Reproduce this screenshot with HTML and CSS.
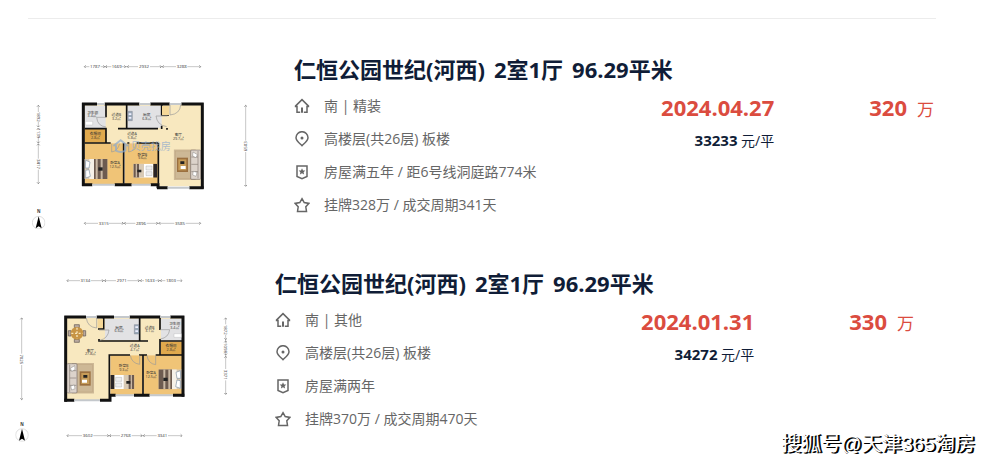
FILE: index.html
```
<!DOCTYPE html>
<html lang="zh-CN">
<head>
  <meta charset="UTF-8">
  <meta name="viewport" content="width=device-width, initial-scale=1.0">
  <title>仁恒公园世纪(河西) 成交</title>
  <link rel="stylesheet" href="styles.css">
</head>
<body>

<!-- shared icons and furniture -->
<svg class="defs" width="0" height="0" aria-hidden="true">
  <symbol id="icon-home" viewBox="0 0 16 16">
    <path d="M.8 8.600h2.200v5.700h3.200M15.200 8.600H13v5.700H9.800M1.200 8.400 8 1.600l6.800 6.800" />
    <path d="M8 9.500v5.200" stroke-width="2" />
  </symbol>
  <symbol id="icon-pin" viewBox="0 0 16 16">
    <path d="M8 14.600C5 11.800 2 9.700 2 6.700a6 6 0 0 1 12 0C14 9.700 11 11.800 8 14.600z" />
    <circle class="solid" cx="8" cy="7" r="1.500" />
  </symbol>
  <symbol id="icon-badge" viewBox="0 0 16 16">
    <path d="M3 2h10v10.500L8 14.700l-5-2.200z" />
    <path class="solid" d="M8 4.200l1 2.200 2.300.2-1.700 1.600.5 2.300L8 9.300l-2.100 1.200.5-2.300-1.700-1.600 2.300-.2z" />
  </symbol>
  <symbol id="icon-star" viewBox="0 0 16 16">
    <path d="M8 1.700l2.200 3.900 4.600.8-3 3.400.7 4.700H3.500l.7-4.700-3-3.400 4.600-.8z" />
  </symbol>
  <symbol id="compass" viewBox="0 0 40 40">
    <circle cx="20" cy="20" r="19" fill="none" stroke="#ccc" stroke-width="2" />
    <path d="M20 1l9 36-9-6-9 6z" fill="#000" />
  </symbol>
  <symbol id="bed" viewBox="0 0 72 60">
    <rect width="70" height="60" fill="#d9cab4" />
    <rect x="16" width="14" height="60" fill="#f6f1e8" />
    <rect x="30" width="40" height="60" fill="#6d5b50" />
    <path d="M38 0v60M53 0v60" stroke="#c9b8a4" stroke-width="6" />
    <path d="M5 4l13 5-3 18H4zM5 34l10-2 4 20-14 5z" fill="#fff" stroke="#7f92a8" stroke-width="2" />
    <path d="M0 0v60" stroke="#4d4a4b" stroke-width="4" />
    <path d="M43 25h13v10H43z" fill="#222" />
  </symbol>
  <symbol id="small-bed" viewBox="0 0 72 42">
    <rect width="60" height="42" fill="#fff" />
    <rect width="18" height="42" fill="#6d5b50" />
    <path d="M9 0v42" stroke="#c9b8a4" stroke-width="4" />
    <rect x="18" width="14" height="42" fill="#d9cab4" />
    <rect x="60" width="12" height="42" fill="#292426" />
    <path d="M38 7h18v12H38zM38 24h18v12H38z" fill="#eee" stroke="#999" />
    <path d="M12 18h12v8H12z" fill="#222" />
  </symbol>
  <symbol id="lounge" viewBox="0 0 82 92">
    <rect y="0" width="66" height="92" fill="#cdb896" />
    <rect x="5" y="5" width="55" height="82" fill="none" stroke="#b69b77" />
    <rect x="10" y="25" width="33" height="43" fill="#9b7040" />
    <rect x="14" y="30" width="24" height="33" fill="#c69c58" />
    <path d="M20 36h12v8H20z" fill="#222" />
    <path d="M21 50h15v9H21z" fill="#fff" />
    <rect x="51" y="2" width="30" height="88" rx="3" fill="#dcd3cb" stroke="#756b66" stroke-width="2" />
    <path d="M53 23h20M53 45h20M53 67h20M73 5v82" stroke="#887d77" stroke-width="2" fill="none" />
    <path d="M58 8l13 8-4 9-10-5zM59 66l11 3-3 12-10-4z" fill="#fff" stroke="#555" />
  </symbol>
</svg>

<main>
  <article class="listing">
    <svg class="plan" viewBox="0 0 720 570" role="img" aria-label="户型图">
      <g class="room">
        <path class="living" d="M190 162h355v247H416V280H190z" />
        <path class="wood" d="M194 280h116v123H194zM314 280h100v123H314z" />
        <path class="closet" d="M194 236h64v42h-64z" />
        <path class="tile" d="M194 167h63v67h-63zM322 167h103v67H322z" />
      </g>
      <g class="walls">
        <path d="M190 158v250M186 162h45M254 162h104M391 162h58M484 162h67M547 158v258" />
        <path d="M186 404h31M284 404h51M392 404h22M411 413h32M508 413h43M414 400v15" />
      </g>
      <g class="inner-walls">
        <path d="M258 165v37M258 234v45M194 236h66M194 279h78M311 279v122M322 279h6M350 279h65M415 279v122M320 165v71M294 236h120M425 165v30h22M425 227v10M441 234v5" />
      </g>
      <g class="windows">
        <path d="M231 162h23M358 162h33M217 404h67M335 404h57M443 413h65M449 162h35" />
      </g>
      <g class="doors">
        <path d="M258 202h-28q2 26 28 29M442 198h-34q3 27 32 32M450 165v30q30-3 32-30M275 281v25q18-3 24-25M326 281v25q18-3 22-25" />
      </g>
      <path d="M196 214h22v11h-22z" fill="#fff" stroke="#aaa" />
      <path d="M323 184h14v28h-14z" fill="#9aa9b8" stroke="#667" />
      <path d="M326 190h8v5h-8zM326 201h8v5h-8z" fill="#eef" />
      <path d="M426 168h21v27h-21z" fill="#f5d898" />
      <use href="#bed" x="192" y="327" width="72" height="60" />
      <use href="#small-bed" x="340" y="341" width="72" height="42" />
      <use href="#lounge" x="461" y="298" width="82" height="92" />
      <g class="brand">
        <path d="M280 288l22-17 22 17M288 286v16q14 8 28 0v-16" />
        <text x="392" y="301">贝壳找房</text>
      </g>
      <g class="labels">
        <text x="218" y="191">卫生间</text><text x="216" y="202">3.4㎡</text>
        <text x="289" y="197">过道B</text><text x="289" y="209">3.2㎡</text>
        <text x="380" y="197">厨房</text><text x="380" y="209">6.8㎡</text>
        <text x="226" y="255">衣帽间</text><text x="226" y="267">2.8㎡</text>
        <text x="336" y="255">过道A</text><text x="336" y="267">5.8㎡</text>
        <text x="475" y="257">客厅</text><text x="475" y="269">29.7㎡</text>
        <text x="285" y="343">卧室A</text><text x="285" y="355">12.5㎡</text>
        <text x="367" y="317">卧室B</text><text x="367" y="328">9.6㎡</text>
      </g>
      <g class="rules">
        <path d="M194 50h14M242 50h32M306 50h48M390 50h78M502 50h40M194 520h40M266 520h80M380 520h83M497 520h44" />
        <path d="M55 166v20M55 215v15M55 262v64M55 359v42M677 166v106M677 306v102" />
        <path class="ticks" d="M197 46l-4 4 4 4M250 46l4 4-4 4M261 46l-4 4 4 4M313 46l4 4-4 4M326 46l-4 4 4 4M420 46l4 4-4 4M431 46l-4 4 4 4M538 46l4 4-4 4M197 516l-4 4 4 4M306 516l4 4-4 4M317 516l-4 4 4 4M409 516l4 4-4 4M421 516l-4 4 4 4M538 516l4 4-4 4M51 170l4-4 4 4M51 227l4 4 4-4M51 238l4-4 4 4M51 275l4 4 4-4M51 286l4-4 4 4M51 397l4 4 4-4M673 170l4-4 4 4M673 405l4 4 4-4" />
      </g>
      <g class="sizes">
        <text x="225" y="55">1787</text><text x="290" y="55">1669</text><text x="372" y="55">2932</text><text x="485" y="55">3288</text>
        <text x="251" y="525">3315</text><text x="363" y="525">2896</text><text x="480" y="525">3585</text>
        <text transform="translate(50 200) rotate(90)">1892</text>
        <text transform="translate(50 250) rotate(90)">1139</text>
        <text transform="translate(50 342) rotate(90)">3417</text>
        <text transform="translate(682 289) rotate(-90)">6503</text>
        <text class="north" x="56" y="490">N</text>
      </g>
      <use href="#compass" x="36" y="498" width="40" height="40" />
    </svg>

    <div class="info">
      <h2><span>仁恒公园世纪(河西)</span> <span>2室1厅</span> <span>96.29平米</span></h2>
      <div class="summary">
        <ul class="details">
          <li><svg class="icon"><use href="#icon-home" /></svg>南 | 精装</li>
          <li><svg class="icon"><use href="#icon-pin" /></svg>高楼层(共26层) 板楼</li>
          <li><svg class="icon"><use href="#icon-badge" /></svg>房屋满五年 / 距6号线洞庭路774米</li>
          <li><svg class="icon"><use href="#icon-star" /></svg>挂牌328万 / 成交周期341天</li>
        </ul>
        <div class="deal">
          <div class="date">2024.04.27</div>
          <div class="unit-price"><b>33233</b> 元/平</div>
        </div>
        <div class="total"><b>320</b><span>万</span></div>
      </div>
    </div>
  </article>

  <article class="listing shifted">
    <svg class="plan" viewBox="3 -3 720 570" role="img" aria-label="户型图">
      <g class="room">
        <path class="living" d="M198 156h350v115H328v134H198z" />
        <path class="wood" d="M331 271h97v118h-97zM431 271h115v118H431z" />
        <path class="closet" d="M483 230h63v40h-63z" />
        <path class="tile" d="M315 161h102v64H315zM483 161h63v66h-63z" />
      </g>
      <g class="walls">
        <path d="M197 152v258M193 156h65M290 156h52M389 156h92M511 156h42M549 152v243" />
        <path d="M193 406h30M300 406h33M330 390v20M327 391h20M402 391h47M519 391h34" />
      </g>
      <g class="inner-walls">
        <path d="M311 159v33h-17M297 222v6h31M327 228h117M419 159v68M480 159v36M480 222v48M480 228h67M467 270h80M429 270v120M328 390V270h62M417 270h24" />
      </g>
      <g class="windows">
        <path d="M342 156h47M481 156h30M223 406h77M347 391h55M449 391h70M258 156h32" />
      </g>
      <g class="doors">
        <path d="M290 159v30q-28-3-31-30M297 195h30q-3 26-28 31M480 194h29q-3 24-28 28M419 271v27q-24-3-28-27M467 271v28q-23-3-26-28" />
      </g>
      <path d="M293 162h16v27h-16z" fill="#f5d898" />
      <path d="M522 206h22v11h-22z" fill="#fff" stroke="#aaa" />
      <path d="M403 179h14v28h-14z" fill="#9aa9b8" stroke="#667" />
      <path d="M406 184h8v5h-8zM406 196h8v5h-8z" fill="#eef" />
      <!-- dining table -->
      <g>
        <path d="M223 179h15v9h-15zM223 223h15v9h-15zM205 197h8v16h-8zM249 197h8v16h-8z" fill="#b9aaa0" stroke="#5d5350" stroke-width="2" />
        <circle cx="231" cy="205" r="19" fill="#c79445" />
        <path d="M231 188v34M214 205h34" stroke="#f7e5bc" stroke-width="4" stroke-dasharray="6 5" />
      </g>
      <use href="#bed" transform="translate(546 313) scale(-1 1)" width="72" height="60" />
      <use href="#small-bed" transform="translate(403 330) scale(-1 1)" width="72" height="42" />
      <use href="#lounge" transform="translate(282 294) scale(-1 1)" width="82" height="92" />
      <g class="labels">
        <text x="357" y="191">厨房</text><text x="357" y="202">6.6㎡</text>
        <text x="449" y="191">过道B</text><text x="449" y="202">3.1㎡</text>
        <text x="524" y="180">卫生间</text><text x="524" y="191">3.4㎡</text>
        <text x="404" y="247">过道A</text><text x="404" y="258">4.7㎡</text>
        <text x="513" y="247">衣帽间</text><text x="513" y="258">2.8㎡</text>
        <text x="271" y="260">客厅</text><text x="271" y="271">27.8㎡</text>
        <text x="371" y="307">卧室B</text><text x="371" y="318">9.3㎡</text>
        <text x="453" y="327">卧室A</text><text x="453" y="339">12.5㎡</text>
      </g>
      <g class="rules">
        <path d="M202 47h38M272 47h76M382 47h50M466 47h30M530 47h14M202 512h44M280 512h80M395 512h75M504 512h40" />
        <path d="M65 160v106M65 300v104M677 160v18M677 210v25M677 264v48M677 346v42" />
        <path class="ticks" d="M205 43l-4 4 4 4M306 43l4 4-4 4M318 43l-4 4 4 4M414 43l4 4-4 4M425 43l-4 4 4 4M474 43l4 4-4 4M485 43l-4 4 4 4M542 43l4 4-4 4M205 508l-4 4 4 4M322 508l4 4-4 4M333 508l-4 4 4 4M422 508l4 4-4 4M434 508l-4 4 4 4M542 508l4 4-4 4M61 163l4-4 4 4M61 400l4 4 4-4M673 163l4-4 4 4M673 220l4 4 4-4M673 232l4-4 4 4M673 266l4 4 4-4M673 278l4-4 4 4M673 384l4 4 4-4" />
      </g>
      <g class="sizes">
        <text x="256" y="52">3134</text><text x="365" y="52">2971</text><text x="449" y="52">1633</text><text x="513" y="52">1803</text>
        <text x="263" y="517">3602</text><text x="377" y="517">2768</text><text x="487" y="517">3341</text>
        <text transform="translate(60 283) rotate(90)">7025</text>
        <text transform="translate(672 194) rotate(90)">1872</text>
        <text transform="translate(672 249) rotate(90)">1098</text>
        <text transform="translate(672 329) rotate(90)">3371</text>
        <text class="north" x="66" y="484">N</text>
      </g>
      <use href="#compass" x="46" y="490" width="40" height="40" />
    </svg>

    <div class="info">
      <h2><span>仁恒公园世纪(河西)</span> <span>2室1厅</span> <span>96.29平米</span></h2>
      <div class="summary">
        <ul class="details">
          <li><svg class="icon"><use href="#icon-home" /></svg>南 | 其他</li>
          <li><svg class="icon"><use href="#icon-pin" /></svg>高楼层(共26层) 板楼</li>
          <li><svg class="icon"><use href="#icon-badge" /></svg>房屋满两年</li>
          <li><svg class="icon"><use href="#icon-star" /></svg>挂牌370万 / 成交周期470天</li>
        </ul>
        <div class="deal">
          <div class="date">2024.01.31</div>
          <div class="unit-price"><b>34272</b> 元/平</div>
        </div>
        <div class="total"><b>330</b><span>万</span></div>
      </div>
    </div>
  </article>
</main>

<div class="watermark">搜狐号@天津365淘房</div>

</body>
</html>
```
FILE: styles.css
```
body {
  position: relative;
  margin: 0;
  background-color: #ffffff;
  color: #101d37;
  font-family: "Open Sans", "Noto Sans CJK SC", sans-serif;
}

.defs {
  position: absolute;
}

main {
  padding-top: 18px;
}

main::before {
  content: "";
  display: block;
  height: 1px;
  margin: 0 61px 31px 28px;
  background-color: #ececec;
}

.listing {
  display: flex;
  gap: 34px;
  padding: 0 63px 24px 20px;
}

.listing.shifted {
  padding: 0 83px 0 1px;
}

/* floor plan */
.plan {
  flex: none;
  width: 240px;
  height: 190px;
}

.living { fill: #f8e8bf; }
.wood { fill: #f0c477; }
.closet { fill: #e0a94d; }
.tile { fill: #e2e2e4; }

.walls {
  fill: none;
  stroke: #111111;
  stroke-width: 9;
}

.inner-walls {
  fill: none;
  stroke: #111111;
  stroke-width: 5;
}

.windows {
  fill: none;
  stroke: #c4c8cc;
  stroke-width: 6;
}

.doors {
  fill: none;
  stroke: #999999;
  stroke-width: 2;
}

.brand {
  fill: none;
  stroke: #8ba9cf;
  stroke-width: 6;
  opacity: 0.7;
}

.brand text {
  fill: #8ba9cf;
  stroke: none;
  font-size: 30px;
  text-anchor: middle;
}

.labels {
  fill: #333333;
  font-size: 11px;
  text-anchor: middle;
}

.sizes {
  fill: #333333;
  font-size: 13px;
  text-anchor: middle;
}

.north {
  font-weight: 700;
}

.rules {
  fill: none;
  stroke: #aaaaaa;
  stroke-width: 2;
}

.ticks {
  stroke: #666666;
}

/* text side */
.info {
  flex: 1;
}

h2 {
  display: flex;
  gap: 9px;
  margin: 0 0 1px;
  font-size: 22px;
  line-height: 38px;
  font-weight: 700;
  white-space: nowrap;
}

.summary {
  display: flex;
  align-items: flex-start;
}

.details {
  flex: 1;
  margin: 0;
  padding: 0;
  list-style: none;
  color: #666666;
  font-size: 14px;
  line-height: 33px;
}

.details li {
  display: flex;
  align-items: center;
}

.icon {
  width: 16px;
  height: 16px;
  margin-right: 14px;
  fill: none;
  stroke: #666666;
  stroke-width: 1.5;
}

.solid {
  fill: #666666;
  stroke: none;
}

.deal {
  margin-right: 95px;
  text-align: right;
}

.date,
.total {
  color: #db4c3f;
  font-size: 22px;
  line-height: 36px;
}

.date,
.total b {
  font-weight: 700;
}

.unit-price {
  font-size: 14px;
  line-height: 30px;
}

.unit-price b {
  font-size: 15px;
}

.total span {
  margin-left: 10px;
  font-size: 17px;
}

.watermark {
  position: absolute;
  right: 22px;
  bottom: 0;
  color: #ffffff;
  font-family: "Liberation Sans", "Noto Sans CJK SC", sans-serif;
  font-size: 20px;
  line-height: 20px;
  text-shadow: 1px 1px 0 #000000, 2px 1px 0 #000000;
}
```
